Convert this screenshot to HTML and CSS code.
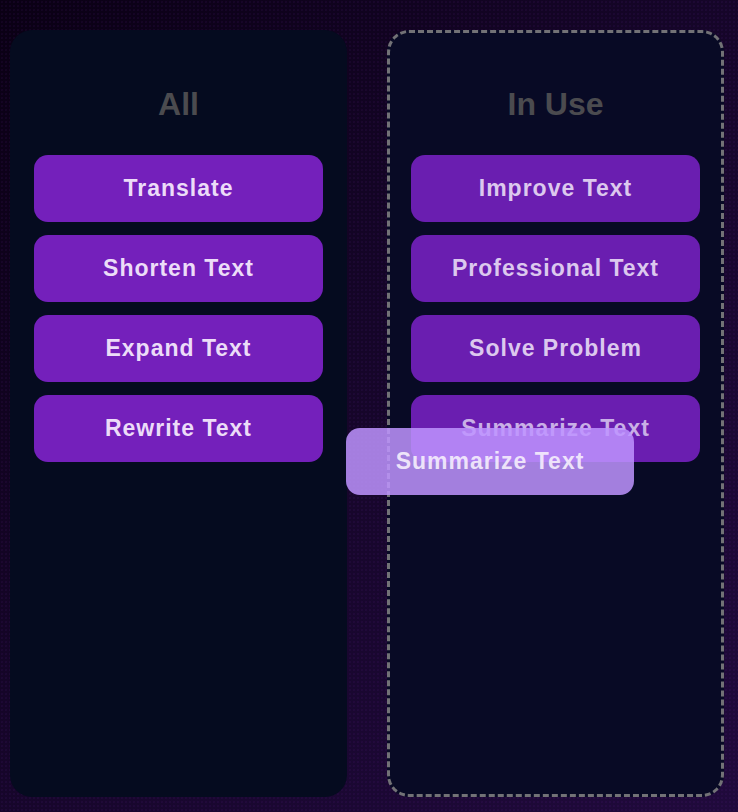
FILE: index.html
```html
<!DOCTYPE html>
<html lang="en">
<head>
<meta charset="utf-8">
<title>Prompt lists</title>
<link rel="stylesheet" href="styles.css">
</head>
<body>
<div class="board">
  <section class="panel panel-all">
    <h2 class="panel-title">All</h2>
    <div class="list">
      <div class="item">Translate</div>
      <div class="item">Shorten Text</div>
      <div class="item">Expand Text</div>
      <div class="item">Rewrite Text</div>
    </div>
  </section>
  <section class="panel panel-use">
    <h2 class="panel-title">In Use</h2>
    <div class="list">
      <div class="item item-use">Improve Text</div>
      <div class="item item-use">Professional Text</div>
      <div class="item item-use">Solve Problem</div>
      <div class="item item-use item-placeholder">Summarize Text</div>
    </div>
  </section>
  <div class="ghost">Summarize Text</div>
</div>
</body>
</html>
```
FILE: styles.css
```css
html, body {
  margin: 0;
  padding: 0;
  height: 100%;
}
body {
  font-family: "Liberation Sans", Arial, sans-serif;
  background-color: #14042a;
  background-image:
    radial-gradient(rgba(120, 40, 180, 0.08) 1px, transparent 1.2px),
    linear-gradient(135deg, #0a0014 0%, #150528 45%, #200a3c 100%);
  background-size: 4px 4px, 100% 100%;
  overflow: hidden;
}
.board {
  position: relative;
  display: flex;
  gap: 40px;
  padding: 30px 14px 15px 10px;
  height: 812px;
  box-sizing: border-box;
}
.panel {
  width: 337px;
  box-sizing: border-box;
  border-radius: 22px;
  border: 3px solid transparent;
  padding: 0 21px;
}
.panel-all {
  background: #050b1f;
}
.panel-use {
  background: #080a25;
  border: 3px dashed #727276;
}
.panel-title {
  margin: 53px 0 32px;
  height: 37px;
  line-height: 37px;
  font-size: 32px;
  font-weight: 700;
  text-align: center;
  color: #4b4b4f;
}
.list {
  display: flex;
  flex-direction: column;
  gap: 13px;
}
.item {
  height: 67px;
  border-radius: 14px;
  background: #7420bb;
  color: #ecdcf8;
  font-size: 23px;
  font-weight: 700;
  letter-spacing: 1px;
  display: flex;
  align-items: center;
  justify-content: center;
}
.item-use {
  background: #6a1eb0;
  color: #dcc8ee;
}
.item-placeholder {
  color: #c9b0e6;
}
.ghost {
  position: absolute;
  left: 346px;
  top: 428px;
  width: 288px;
  height: 67px;
  border-radius: 14px;
  background: rgba(190, 148, 255, 0.85);
  color: rgba(245, 238, 252, 0.92);
  font-size: 23px;
  font-weight: 700;
  letter-spacing: 1px;
  display: flex;
  align-items: center;
  justify-content: center;
}
```
